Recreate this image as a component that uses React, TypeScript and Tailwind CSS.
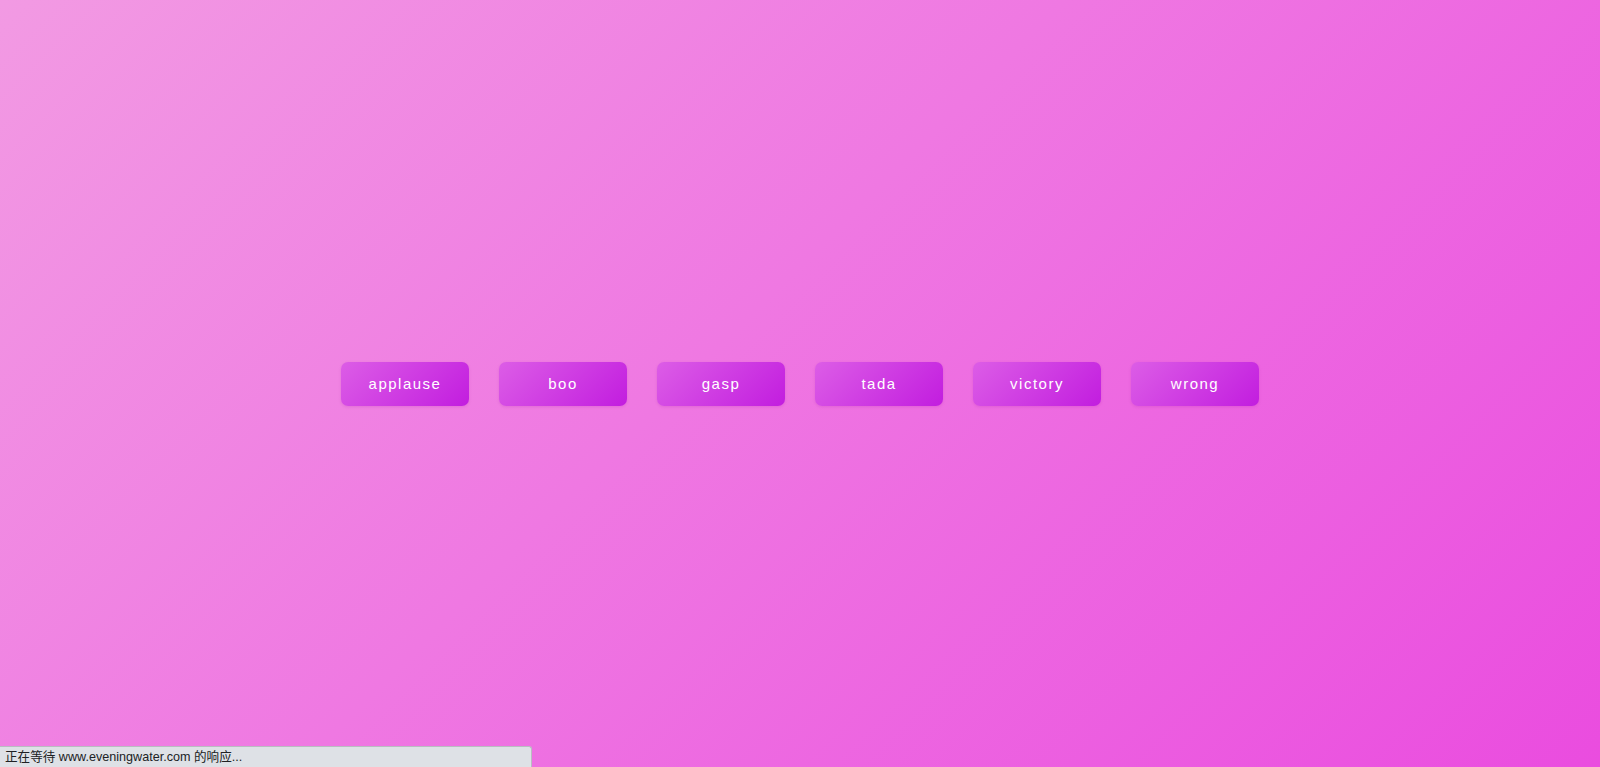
import React from "react";

const sounds = ["applause", "boo", "gasp", "tada", "victory", "wrong"];

export default function App() {
  return (
    <div className="relative w-full h-[767px] overflow-hidden bg-[linear-gradient(135deg,#f29ae3_0%,#ef78e2_45%,#ea4cdf_100%)] font-['Liberation_Sans',Arial,sans-serif]">
      <div className="h-full flex items-center justify-center gap-[30px]">
        {sounds.map((s) => (
          <button
            key={s}
            className="w-[128px] h-[44px] pt-[2px] rounded-[7px] bg-[linear-gradient(135deg,#dc5de6_0%,#c21ddf_100%)] text-white text-[15px] tracking-[1.5px] font-['Liberation_Sans',Arial,sans-serif] shadow-[0_1px_3px_rgba(150,0,150,0.15)]"
          >
            {s}
          </button>
        ))}
      </div>
      <div className="absolute left-0 bottom-0 w-[532px] h-[21px] bg-[#dee1e6] border-t border-r border-[#b9bcc1] rounded-tr-[3px] pl-[5px] text-[12.6px] leading-[20px] text-[#202124] font-['Liberation_Sans','Noto_Sans_CJK_SC',sans-serif]">
        正在等待 www.eveningwater.com 的响应...
      </div>
    </div>
  );
}
